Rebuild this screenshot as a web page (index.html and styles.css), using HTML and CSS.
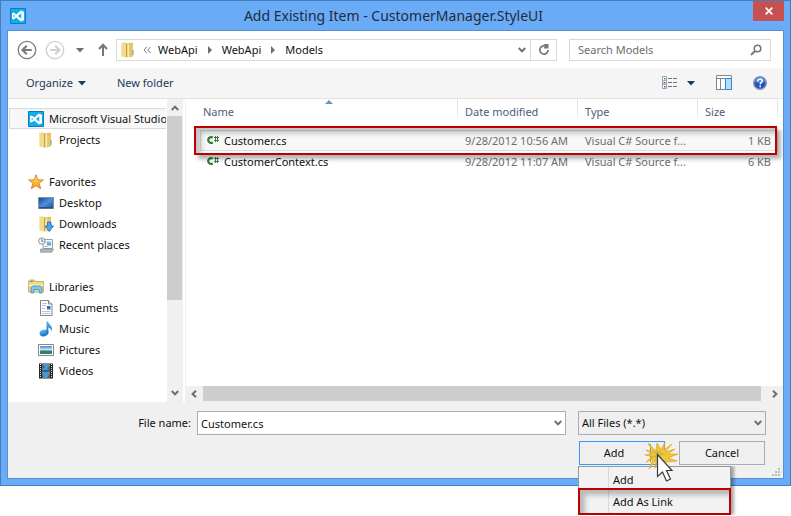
FILE: index.html
```html
<!DOCTYPE html>
<html lang="en">
<head>
<meta charset="utf-8">
<title>Add Existing Item - CustomerManager.StyleUI</title>
<link rel="stylesheet" href="styles.css">
</head>
<body>
<svg class="defs" aria-hidden="true">
  <defs>
    <linearGradient id="gold" x1="0" x2="1"><stop offset="0" stop-color="#f8e6a2"/><stop offset="1" stop-color="#dcb44c"/></linearGradient>
    <linearGradient id="screen" x1="0" y1="0" x2="1" y2="1"><stop offset="0" stop-color="#173f8f"/><stop offset=".5" stop-color="#4f8fe0"/><stop offset="1" stop-color="#1d4ba3"/></linearGradient>
    <linearGradient id="note" x1="0" y1="0" x2="0" y2="1"><stop offset="0" stop-color="#5db9f2"/><stop offset="1" stop-color="#0f6fc4"/></linearGradient>
    <linearGradient id="orange" x1="0" y1="0" x2="0" y2="1"><stop offset="0" stop-color="#ffdf6a"/><stop offset="1" stop-color="#f49a18"/></linearGradient>
    <linearGradient id="sky" x1="0" y1="0" x2="0" y2="1"><stop offset="0" stop-color="#3a86d8"/><stop offset=".5" stop-color="#d8f0f6"/><stop offset=".6" stop-color="#3f8f77"/><stop offset="1" stop-color="#1c5a58"/></linearGradient>
    <symbol id="vs" viewBox="0 0 16 16">
      <path d="M.5.5h15v15H.5z" fill="#10adef" stroke="#0b7cc0"/>
      <path d="M10.800 2.500 14 3.800v8.400l-3.200 1.300L6.300 9.600 3.600 11.500 2 10.800V5.200l1.600-.7 2.700 1.900zM3.700 6.400v3.200L5.100 8zM11.200 5.300 8 8l3.200 2.700z" fill="#fff" fill-rule="evenodd"/>
    </symbol>
    <symbol id="folder" viewBox="0 0 16 16">
      <path d="M1.500.8 5 .3 6.500 1.200 12 .8l1 .7v12.700L8 15.500l-6.500-1z" fill="url(#gold)"/>
      <path d="M1.500.8v13.700l4.500.9V1.800z" fill="#f2dc8c"/>
      <path d="M6 1.800v13.600l1.300-.7V1.200z" fill="#c9a145"/>
      <path d="M7.500 1.500v13l1.800.8V3z" fill="#faedb6"/>
      <path d="M9.300 2.500h3.700v11.700l-3.700 1.100z" fill="#e8c765"/>
      <path d="M13 8v5" stroke="#5d9dc4"/>
    </symbol>
    <symbol id="chevron" viewBox="0 0 8 8"><path d="M.8 2 4 5.400 7.200 2" fill="none" stroke="currentColor" stroke-width="2"/></symbol>
    <symbol id="triangle" viewBox="0 0 8 8"><path d="M0 2h8L4 6.500z" fill="currentColor"/></symbol>
    <symbol id="crumb" viewBox="0 0 8 8"><path d="M2 0v8l4-4z" fill="currentColor"/></symbol>
    <symbol id="csharp" viewBox="0 0 12 10">
      <path d="M5.800 2.500C3.500 1.400 1.200 2.500 1.200 5S3.500 8.600 5.800 7.500" fill="none" stroke="#2f7a32" stroke-width="2.200"/>
      <path d="M8.500 1v6M10.500 1v6M7 2.500h5M7 5.500h5" stroke="#3f7f42" fill="none"/>
    </symbol>
  </defs>
</svg>

<main class="window">
  <header class="titlebar">
    <svg class="icon"><use href="#vs"/></svg>
    <h1>Add Existing Item - CustomerManager.StyleUI</h1>
    <button class="close" aria-label="Close"><svg viewBox="0 0 8 8"><path d="M.7.7l6.600 6.600M7.300.7.700 7.300" stroke="#fff" stroke-width="1.800"/></svg></button>
  </header>

  <div class="client">
    <div class="address-row">
      <button class="plain nav" aria-label="Back"><svg viewBox="0 0 20 20" fill="none" stroke="#7b7b7b"><circle cx="10" cy="10" r="8.700" stroke-width="1.300"/><path d="M14.800 10H6M9.800 5.800 5.500 10l4.300 4.200" stroke-width="2.200"/></svg></button>
      <button class="plain nav" aria-label="Forward"><svg viewBox="0 0 20 20" fill="none" stroke="#cfcfcf"><circle cx="10" cy="10" r="8.700" stroke-width="1.300"/><path d="M5.200 10H14M10.200 5.800l4.300 4.200-4.300 4.200" stroke-width="2"/></svg></button>
      <button class="plain history" aria-label="Recent locations"><svg class="mini"><use href="#triangle"/></svg></button>
      <button class="plain up" aria-label="Up"><svg viewBox="0 0 10 14" fill="none" stroke="#777" stroke-width="2"><path d="M5 13V2M1 6l4-4.200L9 6"/></svg></button>
      <nav class="address" aria-label="Location">
        <svg class="icon"><use href="#folder"/></svg>
        <svg class="mini back" viewBox="0 0 8 8"><path d="M3.800 1 1 4l2.800 3M7.500 1 4.700 4l2.800 3" fill="none" stroke="#777"/></svg>
        <a href="#">WebApi</a>
        <svg class="mini"><use href="#crumb"/></svg>
        <a href="#">WebApi</a>
        <svg class="mini"><use href="#crumb"/></svg>
        <a href="#">Models</a>
        <button class="plain previous" aria-label="Previous locations"><svg class="mini"><use href="#chevron"/></svg></button>
        <button class="plain refresh" aria-label="Refresh"><svg viewBox="0 0 12 12"><path d="M8.500 2.500A4.200 4.200 0 1 0 10.200 6" fill="none" stroke="#777" stroke-width="1.700"/><path d="M6 0h4.500v4.500H6V3h2z" fill="#777"/></svg></button>
      </nav>
      <label class="search">
        <input type="search" placeholder="Search Models" aria-label="Search Models">
        <svg viewBox="0 0 12 12" fill="none" stroke="#777"><circle cx="7.500" cy="4.500" r="3.300" stroke-width="1.600"/><path d="M5 7 1 11" stroke-width="2"/></svg>
      </label>
    </div>

    <div class="toolbar">
      <button class="plain organize">Organize <svg class="mini"><use href="#triangle"/></svg></button>
      <button class="plain">New folder</button>
      <span class="tools">
        <button class="plain view" aria-label="Change your view">
          <svg class="icon" viewBox="0 0 16 14"><g fill="#fff" stroke="#9aa3ad"><path d="M.5.500h4v4h-4zM.5 4.500h4v4h-4zM.5 8.500h4v4h-4z"/></g><path d="M2 2h1.500v1.500H2z" fill="#3b9a4b"/><path d="M1.500 6h2v1.500h-2z" fill="#d8232a"/><path d="M2 10h1.500v1.500H2z" fill="#2768c8"/><path d="M6 2.500h4M11 2.500h4M6 6.500h4M11 6.500h4M6 10.500h4M11 10.500h4" stroke="#68788c"/></svg>
          <svg class="mini"><use href="#triangle"/></svg>
        </button>
        <button class="plain" aria-label="Preview pane"><svg class="icon" viewBox="0 0 16 16"><path d="M.5.500h15v14H.5zM.5 3.500h15M4.500 3.500v11M9.500 3.500v11" fill="#fff" stroke="#858585"/><path d="M9.500 3.500h6v11h-6z" fill="#b5dcfb" stroke="#2a8bdc"/></svg></button>
        <button class="plain" aria-label="Help"><svg class="help" viewBox="0 0 14 14"><circle cx="7" cy="7" r="6.300" fill="#2453bb" stroke="#8d99ad" stroke-width="1.400"/><path d="M2 6A5 5 0 0 1 12 6Q7 8 2 6" fill="#5d8be0"/><path d="M4.800 5.300C4.800 2.400 9.300 2.500 9.200 5 9.100 6.500 7.200 6.700 7.200 8.500M7.200 9.500v1.700" fill="none" stroke="#fff" stroke-width="1.500"/></svg></button>
      </span>
    </div>

    <div class="body">
      <nav class="sidebar" aria-label="Places">
        <ul>
          <li><a class="current" href="#"><svg class="icon"><use href="#vs"/></svg>Microsoft Visual Studio</a>
            <ul><li><a href="#"><svg class="icon"><use href="#folder"/></svg>Projects</a></li></ul></li>
          <li><a href="#"><svg class="icon" viewBox="0 0 16 16"><path d="M8 .8l1.900 5 5.500.1-4.300 3.400 1.600 5.400L8 11.700l-4.700 3 1.600-5.400L.6 5.900l5.500-.1z" fill="url(#orange)" stroke="#d9741c" stroke-width=".8"/></svg>Favorites</a>
            <ul>
              <li><a href="#"><svg class="icon" viewBox="0 0 16 16"><path d="M.5 2.500h15v11H.5z" fill="url(#screen)" stroke="#8192a6"/><path d="M1 12h14v1.500H1z" fill="#314d70"/></svg>Desktop</a></li>
              <li><a href="#"><svg class="icon" viewBox="0 0 16 16"><use href="#folder" width="16" height="16"/><path d="M9.500 6h3.500v4h2.500L11.200 15.500 7 10h2.500z" fill="#48a8ee" stroke="#1767b2" stroke-width=".8"/></svg>Downloads</a></li>
              <li><a href="#"><svg class="icon" viewBox="0 0 16 16"><path d="M5 2.500h9.500v9H5z" fill="#f3f6f8" stroke="#9aa0a6"/><path d="M6.500 5h6M6.500 9.500h3" stroke="#9bb9cf"/><path d="M9 5.500h4v3H9z" fill="#5fa5da"/><path d="M2.500 12h13L14 15.300H2.500z" fill="#b5b5b5" stroke="#858585" stroke-width=".6"/><circle cx="3.800" cy="4" r="3.200" fill="#f7f7f7" stroke="#929292"/><path d="M3.800 2v2.300h1.700" stroke="#555" stroke-width=".8" fill="none"/></svg>Recent places</a></li>
            </ul></li>
          <li><a href="#"><svg class="icon" viewBox="0 0 16 16"><path d="M.5 2.500 1.500 1h5l1 1.500h8V13H.5z" fill="#f2d887" stroke="#bd9a42" stroke-width=".7"/><path d="M2 2.500h3" stroke="#4ba94b"/><path d="M.8 5.500h14.400V7H.8z" fill="#fff3bd"/><path d="M3 8.500 4.500 7h8L14 8.500V14h-2.800v-3.500H5.800V14H3z" fill="#82c9ee" stroke="#368ec4" stroke-width=".8"/></svg>Libraries</a>
            <ul>
              <li><a href="#"><svg class="icon" viewBox="0 0 16 16"><path d="M2.500.5h8l3.500 3.500v11.500H2.500z" fill="#fff" stroke="#858585"/><path d="M10.500.5V4H14" fill="#ddd" stroke="#858585"/><path d="M4 3.500h5M4 5.500h4M4 8.500h3M4 11.500h8.500M4 13.500h8.500" stroke="#adb5d8" stroke-width=".8"/><path d="M9 6h3.500v3.500H9z" fill="#2f6cba"/></svg>Documents</a></li>
              <li><a href="#"><svg class="icon" viewBox="0 0 16 16"><ellipse cx="6" cy="12" rx="4.400" ry="3.300" transform="rotate(-15 6 12)" fill="url(#note)"/><path d="M8.500.5h1.700C10.500 4 16 5 13.200 10.500 13.400 7.500 11 6.500 10.400 6.400V12.500H8.500z" fill="url(#note)"/></svg>Music</a></li>
              <li><a href="#"><svg class="icon" viewBox="0 0 16 16"><path d="M.5 2.500h15v11H.5z" fill="#fff" stroke="#858585"/><path d="M2 4h12v8H2z" fill="url(#sky)"/><path d="M2 9.500c3-2 6 1 12-.5v3H2z" fill="#2f8069"/></svg>Pictures</a></li>
              <li><a href="#"><svg class="icon" viewBox="0 0 16 16"><path d="M1 .500h14v15H1z" fill="#262626"/><path d="M4 1h8v6.500H4zM4 8.500h8V15H4z" fill="#3e9bd5"/><path d="M4 1l3 3-3 2zM12 2v5l-3-1zM4 15v-5l2 4zM12 10v5H9z" fill="#805144"/><path d="M2.500 1v14M13.500 1v14" stroke="#d3e6e6" stroke-dasharray="1 1"/></svg>Videos</a></li>
            </ul></li>
        </ul>
      </nav>
      <div class="scroll vertical" aria-hidden="true">
        <svg class="mini turn-up"><use href="#chevron"/></svg>
        <span class="thumb"></span>
        <svg class="mini"><use href="#chevron"/></svg>
      </div>

      <section class="files">
        <div class="listing">
          <table>
            <thead>
              <tr><th class="name">Name<svg class="sort" viewBox="0 0 8 4"><path d="M0 4l4-4 4 4z" fill="#5d9bbd"/></svg></th><th class="date">Date modified</th><th class="type">Type</th><th class="size">Size</th></tr>
            </thead>
            <tbody>
              <tr class="selected"><td><svg class="cs"><use href="#csharp"/></svg>Customer.cs</td><td>9/28/2012 10:56 AM</td><td>Visual C# Source f...</td><td>1 KB</td></tr>
              <tr><td><svg class="cs"><use href="#csharp"/></svg>CustomerContext.cs</td><td>9/28/2012 11:07 AM</td><td>Visual C# Source f...</td><td>6 KB</td></tr>
            </tbody>
          </table>
          <span class="marker row-marker"></span>
        </div>
        <div class="scroll horizontal" aria-hidden="true">
          <svg class="mini turn-left"><use href="#chevron"/></svg>
          <span class="thumb"></span>
          <svg class="mini turn-right"><use href="#chevron"/></svg>
        </div>
      </section>
    </div>

    <form class="footer">
      <label class="file-label" for="file">File name:</label>
      <span class="combo">
        <input id="file" type="text" value="Customer.cs">
        <svg class="mini"><use href="#chevron"/></svg>
      </span>
      <span class="combo filter">
        <select aria-label="File type"><option>All Files (*.*)</option></select>
        <svg class="mini"><use href="#chevron"/></svg>
      </span>
      <div class="actions">
        <div class="split">
          <button class="push add" type="button">Add</button>
          <button class="plain more" type="button" aria-label="More add options"><svg class="mini"><use href="#triangle"/></svg></button>
          <div class="menu">
            <button type="button">Add</button>
            <button type="button">Add As Link</button>
            <span class="marker menu-marker"></span>
          </div>
          <svg class="click" viewBox="0 0 36 44" aria-hidden="true">
            <path d="M12 10 4 2l5 9-7-2 6 4-7 1 7 1.500L2 21l7-3-4 10 7-9-1 8 3-8 9 2 10-1-9-3 10-4-10 0 7-5-10 3 7-8-8 6 1-8-4 8-4-7z" fill="#f3c63c" stroke="#e0a416" stroke-width=".7"/>
            <path d="M13 14l-6-4 5 1 1-4 1.500 4 4-3-2 4 6 1-6 1.500 1 3.500-4-2-2 4-.500-4-5 2 3.500-3.500z" fill="#cdb63f"/>
            <path d="M13.500 13.500v22l5-4.500 4 9 4-2-4-8.500h5.500z" fill="#fff" stroke="#3a3a42" stroke-width="1.200"/>
          </svg>
        </div>
        <button class="push" type="button">Cancel</button>
      </div>
      <svg class="grip" viewBox="0 0 8 8" aria-hidden="true"><path d="M6 0h2v2H6zM3 3h2v2H3zM6 3h2v2H6zM0 6h2v2H0zM3 6h2v2H3zM6 6h2v2H6z" fill="#bcbcbc"/></svg>
    </form>
  </div>
</main>
</body>
</html>
```
FILE: styles.css
```css
* { box-sizing: border-box; }

body {
  min-height: 100vh;
  margin: 0;
  background: #fff;
  color: #111;
  font: 11px/20px "Noto Sans", "Open Sans", sans-serif;
}

button, input, select { font: inherit; color: inherit; }
a { color: inherit; text-decoration: none; }
ul { list-style: none; margin: 0; padding: 0; }
svg { display: block; flex: none; }

.defs { position: absolute; width: 0; height: 0; }
.icon { width: 16px; height: 16px; }
.mini { width: 8px; height: 8px; color: #6d6d6d; }
.turn-up { transform: rotate(180deg); }
.turn-left { transform: rotate(90deg); }
.turn-right { transform: rotate(-90deg); }

.plain {
  display: flex;
  align-items: center;
  border: 0;
  padding: 0;
  background: none;
}

.window {
  display: flex;
  flex-direction: column;
  height: calc(100vh - 30px);
  padding: 0 6px 6px;
  border: 1px solid #4280bd;
  background: #6aabf7;
}

.titlebar {
  display: flex;
  align-items: center;
  height: 29px;
}
.titlebar .icon { margin-left: 3px; }
.titlebar h1 {
  flex: 1;
  margin: 0 0 0 8px;
  text-align: center;
  color: #222b38;
  font-size: 14px;
  font-weight: 400;
}
.close {
  display: grid;
  place-items: center;
  align-self: flex-start;
  width: 31px;
  height: 20px;
  border: 0;
  padding: 0;
  background: #c75050;
}
.close svg { width: 8px; height: 8px; }

.client {
  flex: 1;
  min-height: 0;
  display: flex;
  flex-direction: column;
  border: 1px solid #5391d4;
  background: #fff;
}

.address-row {
  display: flex;
  align-items: center;
  height: 37px;
  padding: 0 12px 0 9px;
}
.nav { margin-right: 8px; }
.nav svg { width: 20px; height: 20px; }
.history { margin: 0 14px 0 3px; }
.up svg { width: 10px; height: 14px; }
.up { margin-right: 8px; }
.address {
  flex: 1;
  display: flex;
  align-items: center;
  gap: 8px;
  height: 22px;
  margin-right: 12px;
  padding-left: 3px;
  border: 1px solid #d9d9d9;
}
.address .back { margin: 0 -1px; }
.previous { margin-left: auto; }
.refresh {
  justify-content: center;
  width: 26px;
  height: 20px;
  margin-left: -4px;
  border-left: 1px solid #d9d9d9;
}
.refresh svg { width: 12px; height: 12px; }
.search {
  display: flex;
  align-items: center;
  width: 202px;
  height: 22px;
  padding: 0 8px;
  border: 1px solid #d9d9d9;
}
.search input {
  flex: 1;
  min-width: 0;
  border: 0;
  padding: 0;
  background: none;
  outline: 0;
}
.search input::placeholder { color: #6d6d6d; opacity: 1; }
.search svg { width: 12px; height: 12px; }

.toolbar {
  display: flex;
  align-items: center;
  gap: 31px;
  height: 31px;
  padding: 0 16px 0 18px;
  border-bottom: 1px solid #e2e2e2;
  background: #f5f5f5;
  color: #1e395b;
}
.toolbar .mini { color: #1e395b; }
.organize { gap: 5px; }
.tools { display: flex; align-items: center; gap: 21px; margin-left: auto; }
.view { gap: 9px; }
.help { width: 14px; height: 14px; }

.body { flex: 1; min-height: 0; display: flex; }
.sidebar {
  width: 158px;
  padding: 9px 0 0 1px;
  overflow: hidden;
  white-space: nowrap;
}
.sidebar a {
  display: flex;
  align-items: center;
  gap: 5px;
  height: 21px;
  padding-left: 19px;
}
.sidebar li li a { padding-left: 29px; }
.sidebar > ul > li { margin-bottom: 21px; }
.sidebar .current {
  padding-left: 18px;
  border: 1px solid #dadada;
  border-right: 0;
  background: #f7f7f7;
  overflow: hidden;
}

.scroll {
  display: flex;
  align-items: center;
  background: #f0f0f0;
}
.thumb { background: #cdcdcd; }
.vertical {
  flex-direction: column;
  width: 16px;
  margin-left: 1px;
  padding: 5px 0;
}
.vertical .thumb { width: 15px; height: 184px; margin: 4px 1px auto 0; }
.horizontal { height: 16px; padding: 0 4px; }
.horizontal .thumb { flex: 1; height: 15px; margin: 0 10px 1px 5px; }

.files {
  flex: 1;
  min-width: 0;
  display: flex;
  flex-direction: column;
  margin-left: 2px;
  border-left: 1px solid #f0f0f0;
}
.listing { position: relative; flex: 1; padding: 0 5px 0 14px; }

table { width: 100%; border-collapse: collapse; table-layout: fixed; }
th {
  height: 31px;
  padding: 0 0 5px 7px;
  background: linear-gradient(#dfe3ec 50%, #fff) right top / 1px 22px no-repeat;
  color: #4c607a;
  font-weight: 400;
  text-align: left;
}
.name { position: relative; padding-left: 3px; }
.date, .type { width: 120px; }
.size { width: 80px; }
.sort {
  position: absolute;
  top: 1px;
  left: 50%;
  width: 8px;
  height: 4px;
  margin-left: -4px;
}
td {
  height: 21px;
  padding: 0 0 0 7px;
  color: #6d6d6d;
  line-height: 20px;
  white-space: nowrap;
}
td:first-child { color: #111; }
td:last-child { padding-right: 7px; text-align: right; }
.cs { display: inline-block; width: 12px; height: 10px; margin-right: 5px; }
.selected { background: #f7f7f7; outline: 1px solid #dedede; outline-offset: -1px; }

.marker {
  position: absolute;
  border: 2px solid #c00000;
  box-shadow: 4px 4px 4px rgb(0 0 0 / 30%), inset 5px 5px 5px rgb(0 0 0 / 24%);
  pointer-events: none;
}
.row-marker { top: 27px; left: 8px; right: 6px; height: 29px; }

.footer {
  position: relative;
  display: grid;
  grid-template-columns: 183px 1fr 188px;
  align-content: start;
  column-gap: 6px;
  row-gap: 6px;
  height: 76px;
  padding: 9px 17px 0 0;
  background: #f0f0f0;
}
.file-label { text-align: right; line-height: 24px; }
.combo { position: relative; height: 24px; }
.combo input, .combo select {
  display: block;
  width: 100%;
  height: 100%;
  margin: 0;
  padding: 0 20px 0 3px;
  border: 1px solid #acacac;
  border-radius: 0;
  background: #fff;
  appearance: none;
  outline: 0;
}
.combo:not(.filter) { margin-right: 6px; }
.combo .mini { position: absolute; right: 4px; top: 8px; }
.combo select { background: #efefef; }

.actions {
  grid-column: 3;
  display: grid;
  grid-template-columns: 86px 86px;
  gap: 14px;
  margin-left: 1px;
}
.split { position: relative; height: 24px; }
.push {
  width: 100%;
  height: 24px;
  border: 1px solid #acacac;
  padding: 0;
  background: #efefef;
}
.add { padding-right: 16px; border-color: #3399ff; }
.more {
  position: absolute;
  top: 3px;
  right: 1px;
  width: 14px;
  height: 18px;
  padding-left: 3px;
  border-left: 1px solid #8a8a8a;
}
.menu {
  position: absolute;
  z-index: 1;
  top: 25px;
  left: -1px;
  width: 153px;
  padding: 2px 0 1px;
  border: 1px solid #979797;
  background: linear-gradient(90deg, transparent 29px, #d8d8d8 29px, #d8d8d8 30px, transparent 30px) #f2f2f2;
  box-shadow: 3px 0 3px rgb(0 0 0 / 35%);
  clip-path: inset(0 -6px 0 0);
}
.menu button {
  display: block;
  width: 100%;
  height: 22px;
  border: 0;
  padding: 0 0 0 34px;
  background: none;
  text-align: left;
}
.menu-marker {
  right: -1px;
  bottom: -1px;
  left: -1px;
  height: 27px;
  box-shadow: inset 5px 5px 5px rgb(0 0 0 / 24%);
}
.click { position: absolute; z-index: 2; top: 0; left: 65px; width: 36px; height: 44px; }
.grip { position: absolute; right: 3px; bottom: 2px; width: 8px; height: 8px; }
```
